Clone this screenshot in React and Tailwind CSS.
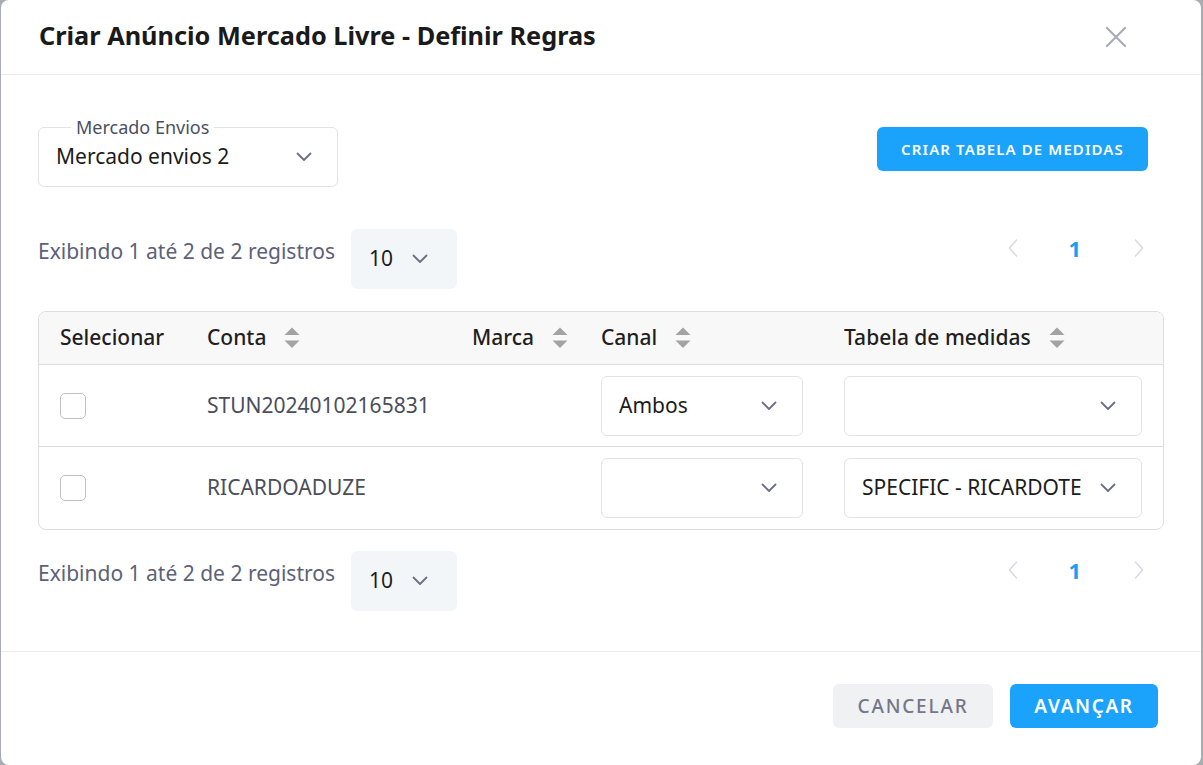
import React from "react";

const font = { fontFamily: '"Noto Sans", "Open Sans", sans-serif' };

function Chevron({ className = "" }) {
  return (
    <svg width="16" height="10" viewBox="0 0 16 10" className={className} fill="none">
      <path d="M1.5 1.5 L8 8 L14.5 1.5" stroke="currentColor" strokeWidth="1.8" strokeLinecap="round" strokeLinejoin="round" />
    </svg>
  );
}

function SortIcon() {
  return (
    <svg width="16" height="22" viewBox="0 0 16 22" className="text-[#a3a3a3]">
      <path d="M8 0.5 L15.5 8 L0.5 8 Z" fill="currentColor" />
      <path d="M0.5 13.5 L15.5 13.5 L8 21 Z" fill="currentColor" />
    </svg>
  );
}

function SelectBox({ value }) {
  return (
    <div className="flex items-center h-[60px] w-full min-w-0 rounded-[6px] border border-[#e2e3e6] bg-white pl-[17px] pr-[25px]">
      <span className="flex-1 min-w-0 overflow-hidden whitespace-nowrap text-[21px] text-[#1c1c1c] mr-[18px]">{value}</span>
      <Chevron className="text-[#6b6f82] shrink-0" />
    </div>
  );
}

function PagerRow() {
  return (
    <div className="flex items-start justify-between">
      <div className="flex items-start">
        <span className="mt-[8px] text-[21px] leading-[28px] text-[#5c6178]">Exibindo 1 até 2 de 2 registros</span>
        <div className="ml-[16px] flex items-center h-[60px] w-[106px] rounded-[6px] bg-[#f3f6f9] pl-[18px] gap-[19px]">
          <span className="text-[21px] text-[#1c1c1c]">10</span>
          <Chevron className="text-[#6b6f82]" />
        </div>
      </div>
      <div className="flex items-center mt-[6px] mr-[21px] h-[26px]">
        <svg width="10" height="18" viewBox="0 0 10 18" fill="none" className="text-[#d9dbe0]">
          <path d="M8.5 1 L1.5 9 L8.5 17" stroke="currentColor" strokeWidth="1.6" strokeLinecap="round" strokeLinejoin="round" />
        </svg>
        <span className="ml-[50px] mr-[53px] text-[22px] font-bold text-[#1b9ef5] leading-none">1</span>
        <svg width="10" height="18" viewBox="0 0 10 18" fill="none" className="text-[#d9dbe0]">
          <path d="M1.5 1 L8.5 9 L1.5 17" stroke="currentColor" strokeWidth="1.6" strokeLinecap="round" strokeLinejoin="round" />
        </svg>
      </div>
    </div>
  );
}

function Checkbox() {
  return <div className="w-[26px] h-[26px] rounded-[5px] border border-[#bfc0c4] bg-white" />;
}

const cols = "grid grid-cols-[147px_265px_129px_243px_minmax(0,1fr)]";

function HeaderCell({ label, sort }) {
  return (
    <div className="flex items-center gap-[18px] pl-[21px]">
      <span className="text-[21px] font-medium text-[#1f1f1f]">{label}</span>
      {sort && <SortIcon />}
    </div>
  );
}

function Row({ account, canal, tabela, last }) {
  return (
    <div className={`${cols} h-[82px] items-center ${last ? "" : "border-b border-[#dcdde1]"}`}>
      <div className="pl-[21px] flex items-center"><Checkbox /></div>
      <div className="pl-[21px] text-[21px] text-[#4a4e5a]">{account}</div>
      <div />
      <div className="pl-[21px] pr-[20px] min-w-0"><SelectBox value={canal} /></div>
      <div className="pl-[21px] pr-[21px] min-w-0"><SelectBox value={tabela} /></div>
    </div>
  );
}

export default function App() {
  return (
    <div className="w-[1203px] h-[765px] bg-[#a9acb1] overflow-hidden" style={font}>
      <div className="ml-[1px] w-[1200px] h-[765px] bg-white rounded-[8px] flex flex-col">
        {/* Header */}
        <div className="h-[75px] flex items-center justify-between pl-[38px] pr-[74px] border-b border-[#ececee]">
          <h1 className="text-[25.3px] font-bold text-[#1a1a1a] -mt-[3px]">Criar Anúncio Mercado Livre - Definir Regras</h1>
          <svg width="22" height="22" viewBox="0 0 22 22" className="text-[#a9abb8]">
            <path d="M2 2 L20 20 M20 2 L2 20" stroke="currentColor" strokeWidth="2.2" strokeLinecap="round" />
          </svg>
        </div>

        {/* Body */}
        <div className="flex-1 pt-[52px] pl-[37px] pr-[36px]">
          <div className="flex items-start justify-between pr-[17px]">
            <div className="relative w-[300px] h-[60px] rounded-[6px] border border-[#e2e3e6] flex items-center justify-between pl-[17px] pr-[25px]">
              <span className="absolute -top-[13px] left-[32px] bg-white px-[5px] text-[18px] leading-[24px] text-[#4b5060]">Mercado Envios</span>
              <span className="text-[21px] text-[#1c1c1c] mt-[-1px]">Mercado envios 2</span>
              <Chevron className="text-[#6b6f82]" />
            </div>
            <button className="h-[44px] w-[271px] rounded-[6px] bg-[#1ba3fb] text-white text-[15px] font-semibold tracking-[1.1px]">
              CRIAR TABELA DE MEDIDAS
            </button>
          </div>

          <div className="mt-[42px]">
            <PagerRow />
          </div>

          <div className="mt-[22px] w-[1126px] rounded-[8px] border border-[#dcdde1] overflow-hidden">
            <div className={`${cols} h-[53px] items-center bg-[#f8f8f9] border-b border-[#dcdde1]`}>
              <HeaderCell label="Selecionar" />
              <HeaderCell label="Conta" sort />
              <HeaderCell label="Marca" sort />
              <HeaderCell label="Canal" sort />
              <HeaderCell label="Tabela de medidas" sort />
            </div>
            <Row account="STUN20240102165831" canal="Ambos" tabela="" />
            <Row account="RICARDOADUZE" canal="" tabela="SPECIFIC - RICARDOTESTE" last />
          </div>

          <div className="mt-[21px]">
            <PagerRow />
          </div>
        </div>

        {/* Footer */}
        <div className="h-[114px] border-t border-[#ececee] flex items-start justify-end pt-[32px] pr-[43px] gap-[17px]">
          <button className="h-[44px] w-[160px] rounded-[6px] bg-[#f0f1f3] text-[#737789] text-[19px] font-medium tracking-[1.8px]">
            CANCELAR
          </button>
          <button className="h-[44px] w-[148px] rounded-[6px] bg-[#1ba3fb] text-white text-[19px] font-semibold tracking-[1.6px]">
            AVANÇAR
          </button>
        </div>
      </div>
    </div>
  );
}
